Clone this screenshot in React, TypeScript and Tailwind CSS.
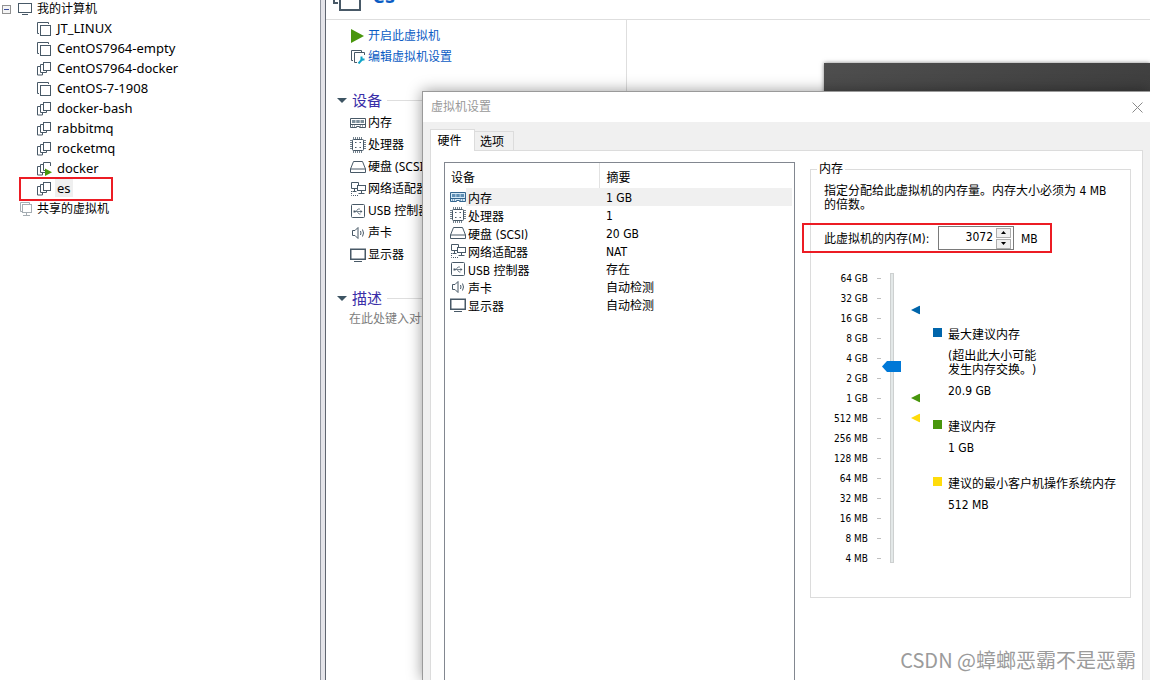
import { useState } from 'react';
import type { ReactNode } from 'react';

type VmKind = 'vm' | 'clone' | 'running';

const vms: { name: string; kind: VmKind }[] = [
  { name: 'JT_LINUX', kind: 'vm' },
  { name: 'CentOS7964-empty', kind: 'vm' },
  { name: 'CentOS7964-docker', kind: 'clone' },
  { name: 'CentOS-7-1908', kind: 'vm' },
  { name: 'docker-bash', kind: 'clone' },
  { name: 'rabbitmq', kind: 'clone' },
  { name: 'rocketmq', kind: 'clone' },
  { name: 'docker', kind: 'running' },
  { name: 'es', kind: 'clone' },
];

const devices = [
  { id: 'memory', name: '内存', summary: '1 GB' },
  { id: 'cpu', name: '处理器', summary: '1' },
  { id: 'disk', name: '硬盘 (SCSI)', summary: '20 GB' },
  { id: 'network', name: '网络适配器', summary: 'NAT' },
  { id: 'usb', name: 'USB 控制器', summary: '存在' },
  { id: 'sound', name: '声卡', summary: '自动检测' },
  { id: 'display', name: '显示器', summary: '自动检测' },
];

const scale = ['64 GB', '32 GB', '16 GB', '8 GB', '4 GB', '2 GB', '1 GB', '512 MB', '256 MB', '128 MB', '64 MB', '32 MB', '16 MB', '8 MB', '4 MB'];

const markers = [
  { mb: 21402, className: 'text-[#0065ab]' },
  { mb: 1024, className: 'text-[#48960c]' },
  { mb: 512, className: 'text-[#ffdc0b]' },
];

const legend = [
  { color: 'bg-[#0065ab]', title: '最大建议内存', note: true, value: '20.9 GB' },
  { color: 'bg-[#48960c]', title: '建议内存', note: false, value: '1 GB' },
  { color: 'bg-[#ffdc0b]', title: '建议的最小客户机操作系统内存', note: false, value: '512 MB' },
];

// slider runs on a log2 scale: 0 = 4 MB, 14 = 64 GB
const toStep = (mb: number) => Math.log2(mb / 4);

function VmIcon({ kind }: { kind: VmKind }) {
  if (kind === 'vm') {
    return (
      <svg width="14" height="14" viewBox="0 0 14 14" fill="none" stroke="#485967" className="mt-[2px] shrink-0">
        <path d="M11.5 2V.5H.5v11H2" />
        <rect x="3.5" y="3.5" width="10" height="10" />
      </svg>
    );
  }
  return (
    <svg width="14" height="14" viewBox="0 0 14 14" fill="none" stroke="#485967" className="mt-[2px] shrink-0 overflow-visible">
      {kind === 'running' ? <path d="M13.5 4V.5h-7v8H8" /> : <rect x="6.5" y=".5" width="7" height="8" />}
      <path d="M6 2.5H3.5v8H8" />
      {kind === 'clone' && <path d="M8 10.5h1.5V9" />}
      <path d="M3 4.5H.5v8.5h5V11" />
      {kind === 'running' && <path d="M8 6.5v7.5l7-3.75z" fill="#48960c" stroke="none" />}
    </svg>
  );
}

function DeviceIcon({ id, active }: { id: string; active?: boolean }) {
  const icons: Record<string, ReactNode> = {
    memory: (
      <>
        <path d="M.5 3.5h15v9H9.5v-1h-3v1h-6z" fill={active ? '#d5e9f7' : '#fff'} />
        <path d="M2 5h3.5v3H2zM6.25 5h3.5v3h-3.5zM10.5 5H14v3h-3.5z" fill={active ? '#5f8fb5' : '#7d8f9b'} stroke="none" />
        <path d="M0 9.5h16" />
        <path d="M2 11h4M10 11h4" strokeDasharray="1 1" />
      </>
    ),
    cpu: (
      <>
        <path d="M3.5 0v2.500M5.500 0v2.500M7.500 0v2.500M9.500 0v2.500M11.500 0v2.500M3.500 13v3M5.500 13v3M7.500 13v3M9.500 13v3M11.500 13v3M0 3.500h2.500M0 5.500h2.500M0 7.500h2.500M0 9.500h2.500M0 11.500h2.500M13 3.500h3M13 5.500h3M13 7.500h3M13 9.500h3M13 11.500h3" stroke="#74828d" />
        <rect x="2.500" y="2.500" width="11" height="11" rx="1" fill="#fff" />
        <path d="M5 5.500h1.500M9.500 5.500H11M5 10.500h1.500M9.500 10.500H11" />
      </>
    ),
    disk: (
      <>
        <path d="M3.500 2.500h9L15.500 10H.5z" />
        <path d="M.5 10v3.500h15V10" />
      </>
    ),
    network: (
      <>
        <path d="M7 7.500H1.500v-6h7V4M4.500 8v2M2.500 10.500h4" />
        <rect x="7.500" y="4.500" width="8" height="5" fill="#fff" />
        <path d="M11.500 10v2M8.500 12.500h6" />
        <path d="M1.500 10v4.500h7" strokeDasharray="1 1" />
      </>
    ),
    usb: (
      <>
        <rect x="1.500" y="1.500" width="13" height="13" rx="1" />
        <path d="M4 8.500h7.500M6 8.500l2-2.500h2M7 8.500l2 2.500h1.500" stroke="#74828d" />
        <path d="M3.500 7.500h2v2h-2zM10.500 7l2 1.500-2 1.500z" fill="#485967" stroke="none" />
      </>
    ),
    sound: (
      <>
        <path d="M2.500 5.500H5l3-3v11l-3-3H2.500z" />
        <path d="M10.500 6q1 2 0 4M12.500 4.500q2 3.500 0 7" />
      </>
    ),
    display: (
      <>
        <rect x=".75" y="2.250" width="14.500" height="10" strokeWidth="1.500" />
        <path d="M4 14.500h8" />
      </>
    ),
  };
  return (
    <svg width="16" height="16" viewBox="0 0 16 16" fill="none" stroke={active ? '#33658e' : '#485967'} className="shrink-0">
      {icons[id]}
    </svg>
  );
}

function Sidebar() {
  return (
    <nav className="w-[320px] shrink-0 bg-white text-xs text-black">
      <div className="flex h-[18px] items-center pl-[2px]">
        <button aria-label="折叠" className="flex size-[9px] items-center justify-center border border-[#919191] bg-[#f4f4f4]">
          <span className="h-px w-[5px] bg-[#3c4fa0]" />
        </button>
        <svg width="14" height="12" viewBox="0 0 14 12" fill="none" stroke="#485967" className="ml-[7px]">
          <rect x=".5" y=".5" width="13" height="9" />
          <path d="M4 11.500h6" />
        </svg>
        <span className="ml-[5px]">我的计算机</span>
      </div>
      <ul>
        {vms.map(vm => (
          <li key={vm.name} className="relative flex h-5 items-center pl-[37px] text-[13px]">
            <VmIcon kind={vm.kind} />
            <span className={`ml-1 px-[2px] leading-[18px] ${vm.name === 'es' ? 'bg-[#efefef]' : ''}`}>{vm.name}</span>
            {vm.name === 'es' && <span className="absolute top-[-1px] left-[19px] h-6 w-[94px] border-2 border-[#ec1c24]" />}
          </li>
        ))}
      </ul>
      <div className="flex h-[22px] items-center pl-5">
        <svg width="12" height="14" viewBox="0 0 12 14" fill="none" stroke="#a5adb3">
          <path d="M2 9.500H.5v-9h9V2" />
          <rect x="2.500" y="2.500" width="9" height="8" />
          <path d="M6.500 11v2M3 13.500h7" />
        </svg>
        <span className="ml-[5px]">共享的虚拟机</span>
      </div>
    </nav>
  );
}

function SectionTitle({ children }: { children: ReactNode }) {
  return (
    <h2 className="flex h-[22px] items-center pl-[11px] text-[15px] text-[#3a2fa8]">
      <svg width="10" height="5" viewBox="0 0 10 5" fill="#3d5463">
        <path d="M0 0h10L5 5z" />
      </svg>
      <span className="mx-[5px] shrink-0 leading-5">{children}</span>
      <span className="h-px flex-1 bg-[#dedede]" />
    </h2>
  );
}

function VmSummary() {
  return (
    <main className="flex min-w-0 flex-1 flex-col bg-white text-xs">
      <div className="flex h-5 shrink-0 items-end overflow-hidden border-b border-[#dedede] pl-[7px]">
        <svg width="28" height="28" viewBox="0 0 28 28" fill="none" stroke="#485967" strokeWidth="2" className="mb-2 shrink-0">
          <path d="M24 1H1v19h4" />
          <rect x="7" y="7" width="20" height="20" />
        </svg>
        <h1 className="mb-[11px] ml-3 text-xl leading-6 font-bold text-[#0b5cc4]">es</h1>
      </div>
      <div className="flex flex-1">
        <div className="w-[301px] shrink-0 border-r border-[#dedede]">
          <div className="flex flex-col pt-[5px] pl-[25px] text-[#0b5cc4]">
            <a href="#start" className="flex h-[21px] items-center gap-1">
              <svg width="13" height="14" viewBox="0 0 13 14" fill="#48960c">
                <path d="M0 0l13 7-13 7z" />
              </svg>
              开启此虚拟机
            </a>
            <a href="#edit" className="flex h-[21px] items-center gap-[3px]">
              <svg width="14" height="14" viewBox="0 0 14 14" fill="none" stroke="#485967">
                <path d="M10.500 2V.5H.5v10H2" />
                <path d="M13.500 5V2.500h-10v10H6" />
                <path d="M7.500 13.500l4-4.500" stroke="#12a5c8" strokeWidth="2" />
                <path d="M10.500 6.500v3h3" stroke="#12a5c8" strokeWidth="2" />
              </svg>
              编辑虚拟机设置
            </a>
          </div>
          <div className="pt-[22px]">
            <SectionTitle>设备</SectionTitle>
            <ul className="pt-px pl-6">
              {devices.map(d => (
                <li key={d.id} className="flex h-[22px] items-center gap-[2px] text-black">
                  <DeviceIcon id={d.id} />
                  {d.name}
                </li>
              ))}
            </ul>
          </div>
          <div className="pt-[21px]">
            <SectionTitle>描述</SectionTitle>
            <p className="pt-px pl-[23px] leading-[18px] text-[#7d7d7d]">在此处键入对该</p>
          </div>
        </div>
        <div className="flex-1 pt-[43px] pl-[197px]">
          <div className="h-[300px] bg-linear-to-br from-[#4e4e4e] to-[#333333] shadow-[0_0_4px_rgba(0,0,0,0.5)]" />
        </div>
      </div>
    </main>
  );
}

function DeviceTable() {
  return (
    <div className="w-[351px] shrink-0 border border-b-0 border-[#828790] bg-white pr-[2px]">
      <table className="w-full table-fixed border-collapse text-left">
        <thead>
          <tr className="h-[25px]">
            <th className="w-[154px] border-r border-[#e2e2e2] p-0 pt-[5px] pl-[6px] font-normal leading-4">设备</th>
            <th className="p-0 pt-[5px] pl-[7px] font-normal leading-4">摘要</th>
          </tr>
        </thead>
        <tbody>
          {devices.map((d, i) => (
            <tr key={d.id} className="h-[18px]">
              <td className="p-0">
                <div className="flex h-[18px] items-center pl-[5px]">
                  <DeviceIcon id={d.id} active={i === 0} />
                  <span className={`flex h-full flex-1 items-center pt-[3px] pl-[2px] ${i === 0 ? 'bg-[#f0f0f0]' : ''}`}>{d.name}</span>
                </div>
              </td>
              <td className={`p-0 pt-[2px] pl-[7px] leading-4 ${i === 0 ? 'bg-[#f0f0f0]' : ''}`}>{d.summary}</td>
            </tr>
          ))}
        </tbody>
      </table>
    </div>
  );
}

function MemoryPanel() {
  const [memory, setMemory] = useState(3072);

  return (
    <fieldset className="min-w-0 flex-1 self-start border border-[#dcdcdc] pb-[29px] pl-[13px]">
      <legend className="-ml-[7px] px-[2px] leading-[14px]">内存</legend>
      <p className="max-w-[290px] pt-[8px] leading-[14px]">指定分配给此虚拟机的内存量。内存大小必须为 4 MB 的倍数。</p>

      <div className="relative mt-[14px] flex h-6 items-center">
        <span className="absolute top-[-3px] left-[-22px] h-[30px] w-[250px] border-2 border-[#ec1c24]" />
        <label htmlFor="memory" className="w-[114px] shrink-0 pt-[2px] whitespace-nowrap">此虚拟机的内存(M):</label>
        <div className="relative flex h-6 w-[76px] items-center border border-[#7a7a7a] pr-[2px]">
          <input
            id="memory"
            value={memory}
            onChange={e => setMemory(Number(e.target.value) || 0)}
            className="w-0 flex-1 pr-[3px] pb-[2px] text-right outline-none"
          />
          <div className="flex flex-col gap-px">
            <button aria-label="增加" onClick={() => setMemory(m => m + 4)} className="flex h-[10px] w-[15px] items-center justify-center border border-[#adadad] bg-[#f0f0f0]">
              <svg width="5" height="3" viewBox="0 0 5 3"><path d="M0 3h5L2.500 0z" /></svg>
            </button>
            <button aria-label="减少" onClick={() => setMemory(m => Math.max(4, m - 4))} className="flex h-[10px] w-[15px] items-center justify-center border border-[#adadad] bg-[#f0f0f0]">
              <svg width="5" height="3" viewBox="0 0 5 3"><path d="M0 0h5L2.500 3z" /></svg>
            </button>
          </div>
        </div>
        <span className="ml-[7px] pt-[2px]">MB</span>
      </div>

      <div className="mt-[18px] flex">
        <ul className="w-[58px] shrink-0 text-[10px]">
          {scale.map(s => (
            <li key={s} className="flex h-5 items-center gap-[9px]">
              <span className="w-11 pt-px text-right whitespace-nowrap">{s}</span>
              <span className="h-px w-1 bg-[#bfbfbf]" />
            </li>
          ))}
        </ul>
        <div className="relative mt-[5px] flex h-[290px] w-[19px] shrink-0 justify-center">
          <div className="w-1 border border-[#cdd0d0] bg-[#e3e8e8]" />
          <input
            type="range"
            aria-label="内存大小"
            min={0}
            max={14}
            step="any"
            value={toStep(Math.max(4, memory))}
            onChange={e => setMemory(Math.round(2 ** Number(e.target.value)) * 4)}
            className="absolute inset-0 h-full w-full appearance-none bg-transparent [direction:rtl] [writing-mode:vertical-lr] [&::-webkit-slider-thumb]:h-[11px] [&::-webkit-slider-thumb]:w-[19px] [&::-webkit-slider-thumb]:appearance-none [&::-webkit-slider-thumb]:bg-[#0078d7] [&::-webkit-slider-thumb]:[clip-path:polygon(0_50%,5px_0,100%_0,100%_100%,5px_100%)]"
          />
        </div>
        <div className="relative mt-[10px] ml-[10px] h-[280px] w-[9px] shrink-0">
          {markers.map(m => (
            <svg
              key={m.mb}
              width="9"
              height="9"
              viewBox="0 0 9 9"
              fill="currentColor"
              className={`absolute -translate-y-1/2 ${m.className}`}
              style={{ top: `${100 - (toStep(m.mb) / 14) * 100}%` }}
            >
              <path d="M9 0v9L0 4.500z" />
            </svg>
          ))}
        </div>
        <dl className="mt-[60px] ml-[13px] flex flex-col gap-[22px] leading-[14px]">
          {legend.map(l => (
            <div key={l.title} className="flex gap-[6px]">
              <span className={`size-[9px] shrink-0 ${l.color}`} />
              <div className="flex flex-col gap-[7px] whitespace-nowrap">
                <dt>{l.title}</dt>
                {l.note && <dd className="[text-spacing-trim:space-all]">(超出此大小可能<br />发生内存交换。)</dd>}
                <dd>{l.value}</dd>
              </div>
            </div>
          ))}
        </dl>
      </div>
    </fieldset>
  );
}

function SettingsDialog() {
  return (
    <div
      role="dialog"
      aria-label="虚拟机设置"
      className="absolute top-[91px] right-0 bottom-0 left-[422px] flex flex-col border-t border-l border-[#9a9a9a] bg-[#f0f0f0] font-['DejaVu_Sans_Condensed','Noto_Sans_CJK_SC',sans-serif] text-xs text-black shadow-[0_0_14px_rgba(0,0,0,0.4)]"
    >
      <header className="flex h-[30px] shrink-0 items-center justify-between bg-white pr-[7px] pl-2 text-[#999999]">
        <span>虚拟机设置</span>
        <button aria-label="关闭">
          <svg width="11" height="11" viewBox="0 0 11 11" stroke="#8a8a8a">
            <path d="M.5.5l10 10M10.500.5l-10 10" />
          </svg>
        </button>
      </header>
      <div className="flex min-h-0 flex-1 flex-col px-[7px] pt-[7px]">
        <div role="tablist" className="flex items-end">
          <button role="tab" aria-selected="true" className="z-10 -mb-px h-[22px] w-[45px] border border-b-0 border-[#dcdcdc] bg-white pr-[6px]">硬件</button>
          <button role="tab" aria-selected="false" className="h-[19px] w-[39px] border border-b-0 border-l-0 border-[#dcdcdc] pt-px pr-1">选项</button>
        </div>
        <div className="flex min-h-0 flex-1 gap-[15px] border border-b-0 border-[#dcdcdc] bg-white pt-[11px] pr-[11px] pl-[13px]">
          <DeviceTable />
          <MemoryPanel />
        </div>
      </div>
    </div>
  );
}

export default function App() {
  return (
    <div className="relative flex h-screen overflow-hidden bg-white font-['Noto_Sans','Noto_Sans_CJK_SC',sans-serif]">
      <Sidebar />
      <div className="w-[6px] shrink-0 border-r border-l border-r-[#5f6570] border-l-[#8f949e] bg-[#e4e4e9]" />
      <VmSummary />
      <SettingsDialog />
      <span className="absolute right-[14px] bottom-[6px] font-['Noto_Sans_CJK_SC',sans-serif] text-xl leading-7 text-[#9b9b9b]">CSDN @蟑螂恶霸不是恶霸</span>
    </div>
  );
}
